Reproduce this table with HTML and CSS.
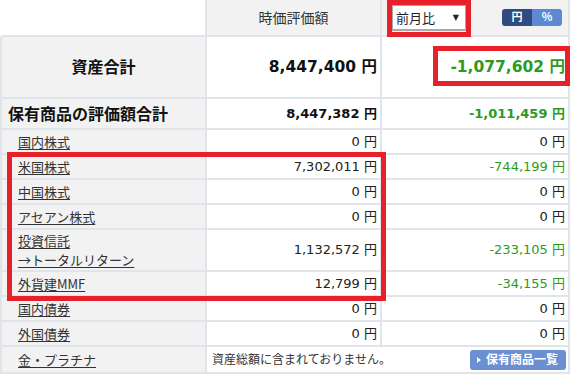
FILE: index.html
```html
<!DOCTYPE html>
<html lang="ja">
<head>
<meta charset="utf-8">
<title>資産合計</title>
<link rel="stylesheet" href="styles.css">
</head>
<body>
<div class="page">
  <div class="sheet">
    <div class="c first blank h-head"></div>
    <div class="c head center h-head">時価評価額</div>
    <div class="c head tools h-head">
      <div class="select"><span>前月比</span><span class="arrow">▼</span></div>
      <div class="toggle"><span class="seg on">円</span><span class="seg">%</span></div>
    </div>

    <div class="c first total h-total">資産合計</div>
    <div class="c num big h-total">8,447,400 円</div>
    <div class="c num big green h-total">-1,077,602 円</div>

    <div class="c first sum h-sum">保有商品の評価額合計</div>
    <div class="c num mid h-sum">8,447,382 円</div>
    <div class="c num mid green h-sum">-1,011,459 円</div>

    <div class="c first lbl h-row"><a href="#">国内株式</a></div>
    <div class="c num h-row">0 円</div>
    <div class="c num h-row">0 円</div>

    <div class="c first lbl h-row"><a href="#">米国株式</a></div>
    <div class="c num h-row">7,302,011 円</div>
    <div class="c num green h-row">-744,199 円</div>

    <div class="c first lbl h-row"><a href="#">中国株式</a></div>
    <div class="c num h-row">0 円</div>
    <div class="c num h-row">0 円</div>

    <div class="c first lbl h-row"><a href="#">アセアン株式</a></div>
    <div class="c num h-row">0 円</div>
    <div class="c num h-row">0 円</div>

    <div class="c first lbl two h-two"><a href="#">投資信託</a><a href="#">→トータルリターン</a></div>
    <div class="c num h-two">1,132,572 円</div>
    <div class="c num green h-two">-233,105 円</div>

    <div class="c first lbl h-row"><a href="#">外貨建MMF</a></div>
    <div class="c num h-row">12,799 円</div>
    <div class="c num green h-row">-34,155 円</div>

    <div class="c first lbl h-row"><a href="#">国内債券</a></div>
    <div class="c num h-row">0 円</div>
    <div class="c num h-row">0 円</div>

    <div class="c first lbl h-row"><a href="#">外国債券</a></div>
    <div class="c num h-row">0 円</div>
    <div class="c num h-row">0 円</div>

    <div class="c first lbl h-last"><a href="#">金・プラチナ</a></div>
    <div class="c note h-last">
      <span>資産総額に含まれておりません。</span>
      <a class="btn" href="#"><span class="tri"></span>保有商品一覧</a>
    </div>
  </div>

  <div class="mark m-select"></div>
  <div class="mark m-total"></div>
  <div class="mark m-rows"></div>
</div>
</body>
</html>
```

FILE: styles.css
```css
body {
  margin: 0;
  font-family: "Noto Sans CJK JP", sans-serif;
  color: #222;
  background: #fff;
}

.page {
  position: relative;
  width: 570px;
  height: 375px;
  overflow: hidden;
}

.sheet {
  display: grid;
  grid-template-columns: 207px 175px 188px;
}

.c {
  box-sizing: border-box;
  display: flex;
  align-items: center;
  background: #fff;
  border-right: 2px solid #dfe5ea;
  border-bottom: 2px solid #dfe5ea;
  line-height: 1.2;
}

.c.first {
  border-left: 2px solid #dfe5ea;
  background: #f2f2f2;
}

.c.blank {
  background: #fff;
  border-left-color: #fff;
}

.h-head { height: 37px; }
.h-total { height: 62px; }
.h-sum { height: 31px; }
.h-row { height: 25px; }
.h-two { height: 42px; }
.h-last { height: 27px; }

.head {
  background: #f2f2f2;
  color: #333;
  font-size: 14px;
}

.center { justify-content: center; }

.tools {
  justify-content: space-between;
  padding: 0 6px 0 9px;
}

.select {
  box-sizing: border-box;
  width: 76px;
  height: 27px;
  border: 2px solid #a9a9a9;
  background: #fff;
  display: flex;
  align-items: center;
  justify-content: space-between;
  padding: 0 6px 0 3px;
  font-size: 13px;
  color: #222;
}

.arrow {
  font-family: "DejaVu Sans", sans-serif;
  font-size: 8px;
}

.toggle {
  display: flex;
  border-radius: 3px;
  overflow: hidden;
  margin-top: -1px;
}

.seg {
  width: 30px;
  height: 17px;
  display: flex;
  align-items: center;
  justify-content: center;
  background: #5f88d3;
  color: #fff;
  font-size: 11px;
  font-weight: bold;
}

.seg.on { background: #2f4b82; }

.total {
  justify-content: center;
  font-size: 16px;
  font-weight: bold;
  color: #111;
}

.sum {
  padding-left: 6px;
  font-size: 16px;
  font-weight: bold;
  color: #111;
}

.lbl {
  padding-left: 16px;
  font-size: 13px;
}

.lbl a {
  color: #333;
  text-decoration: underline;
  text-underline-offset: 2px;
}

.two {
  flex-direction: column;
  align-items: flex-start;
  justify-content: center;
  line-height: 19px;
}

.num {
  justify-content: flex-end;
  padding-right: 3px;
  font-family: "DejaVu Sans", "Noto Sans CJK JP", sans-serif;
  font-size: 13px;
  color: #222;
  white-space: pre;
}

.num.big {
  font-size: 15.5px;
  font-weight: bold;
  color: #111;
}

.num.mid {
  font-weight: bold;
  color: #111;
}

.num.green { color: #2c9a1e; }

.note {
  grid-column: span 2;
  justify-content: space-between;
  padding: 0 2px 0 5px;
  font-size: 12px;
  color: #333;
}

.btn {
  box-sizing: border-box;
  width: 96px;
  height: 20px;
  border-radius: 3px;
  background: #6a8fd3;
  color: #fff;
  text-decoration: none;
  font-size: 12px;
  font-weight: bold;
  display: flex;
  align-items: center;
  padding-left: 7px;
  gap: 5px;
}

.tri {
  width: 0;
  height: 0;
  border-left: 4px solid #fff;
  border-top: 3px solid transparent;
  border-bottom: 3px solid transparent;
}

.mark {
  position: absolute;
  box-sizing: border-box;
  border: 5px solid #e8202a;
}

.m-select { left: 387px; top: 0; width: 84px; height: 37px; }
.m-total { left: 433px; top: 46px; width: 137px; height: 40px; }
.m-rows { left: 7px; top: 152px; width: 379px; height: 149px; }
```
